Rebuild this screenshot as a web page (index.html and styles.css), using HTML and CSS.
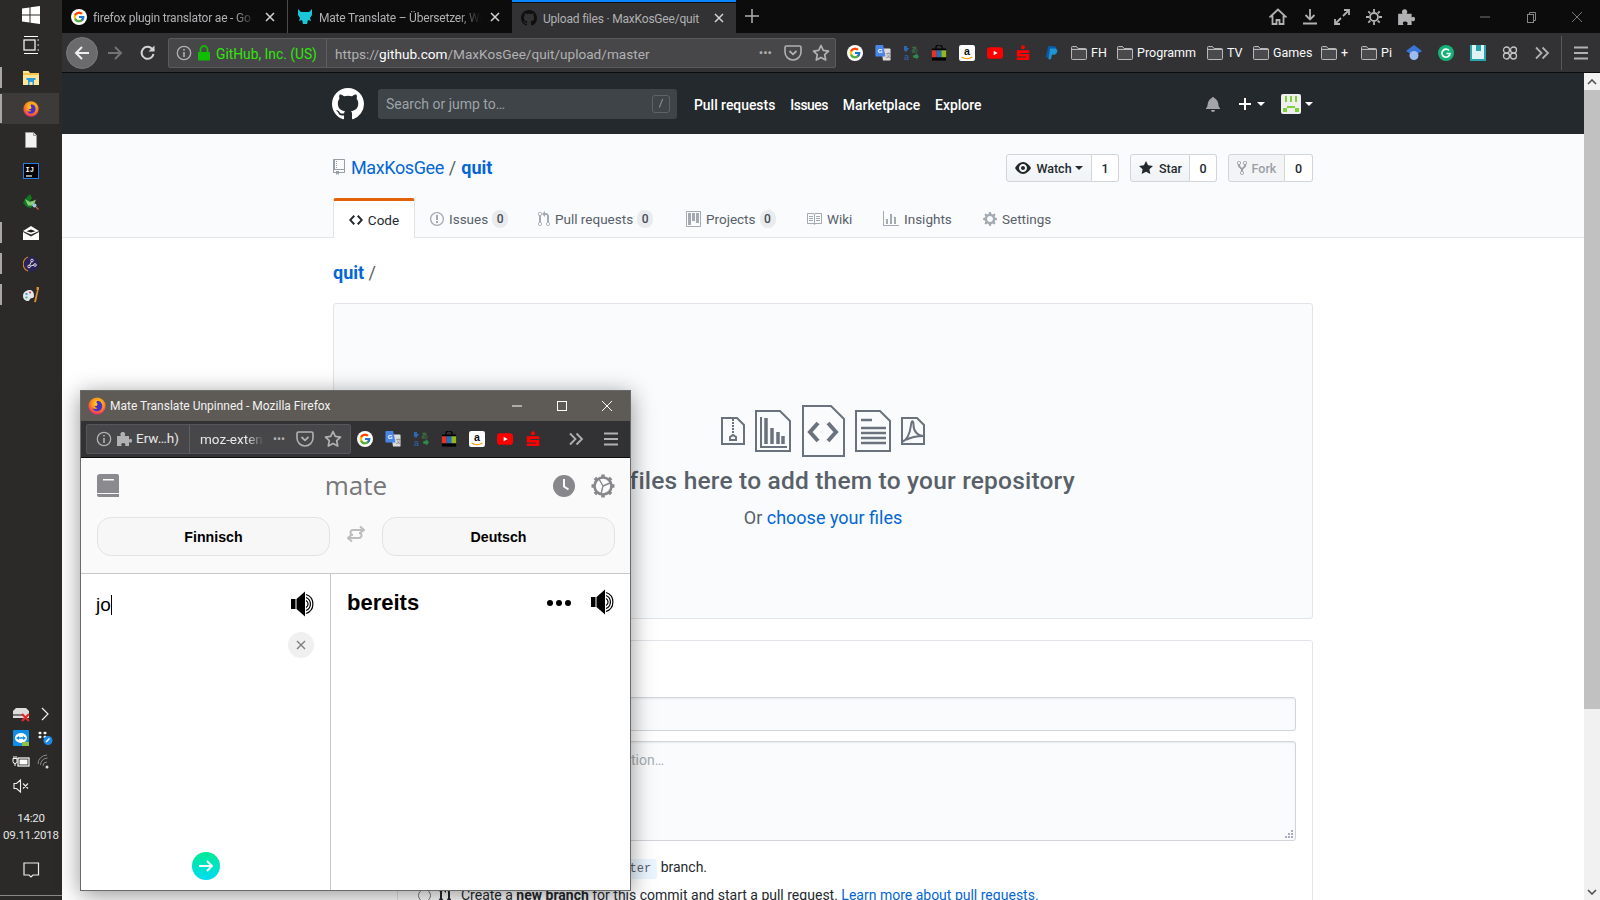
FILE: index.html
```html
<!DOCTYPE html>
<html lang="en">
<head>
<meta charset="utf-8">
<title>Upload files · MaxKosGee/quit</title>
<link rel="stylesheet" href="styles.css">
</head>
<body>
<svg class="defs" aria-hidden="true">
  <defs>
    <radialGradient id="fxg" cx="55%" cy="35%" r="70%"><stop offset="0" stop-color="#ffe226"/><stop offset=".55" stop-color="#ff8a16"/><stop offset="1" stop-color="#e31587"/></radialGradient>
    <symbol id="i-fx" viewBox="0 0 24 24"><circle cx="12" cy="12" r="11.500" fill="url(#fxg)"/><path d="M13 5c4 .5 6 3.500 6 7 0 4-3 7-7 7-3 0-5-1.500-6-4 2.500 1.500 5.500 1 6.500-.5-2 0-3.500-1-3.500-2.500 2.500.5 3.500-1 3.500-2 0-1.500-1-2.500-1.500-3 .5-1 1.500-2 2-2z" fill="#4a2fc4"/></symbol>
    <symbol id="i-g" viewBox="0 0 48 48"><circle cx="24" cy="24" r="24" fill="#fff"/><g transform="translate(4.800 4.800) scale(.8)"><path fill="#FFC107" d="M43.600 20.500H42V20H24v8h11.300C33.700 32.700 29.200 36 24 36c-6.600 0-12-5.400-12-12s5.400-12 12-12c3 0 5.800 1.100 7.900 3l5.700-5.700C34 6.100 29.300 4 24 4 13 4 4 13 4 24s9 20 20 20 20-9 20-20c0-1.200-.1-2.400-.4-3.500z"/><path fill="#FF3D00" d="M6.300 14.700l6.600 4.800C14.700 15.100 19 12 24 12c3 0 5.800 1.100 7.900 3l5.700-5.700C34 6.100 29.300 4 24 4 16.300 4 9.700 8.300 6.300 14.700z"/><path fill="#4CAF50" d="M24 44c5.200 0 9.900-2 13.400-5.200l-6.200-5.200C29.200 35.100 26.700 36 24 36c-5.200 0-9.600-3.300-11.300-8l-6.500 5C9.500 39.600 16.200 44 24 44z"/><path fill="#1976D2" d="M43.600 20.500H42V20H24v8h11.300c-.8 2.200-2.200 4.200-4.100 5.600l6.200 5.200C37 39.200 44 34 44 24c0-1.200-.1-2.400-.4-3.500z"/></g></symbol>
    <symbol id="i-gt" viewBox="0 0 18 18"><path d="M7 4h9.500a1 1 0 0 1 1 1v11.500a1 1 0 0 1-1 1H9z" fill="#dcdcdc"/><path d="M1.500 0H9l3 13H1.500a1 1 0 0 1-1-1V1a1 1 0 0 1 1-1z" fill="#4a86e8"/><text x="3" y="9.500" font-size="7" font-weight="700" fill="#fff" font-family="Liberation Sans, sans-serif">G</text><text x="12" y="13" font-size="6" fill="#777" font-family="Noto Sans CJK JP, sans-serif">文</text></symbol>
    <symbol id="i-tr" viewBox="0 0 18 18"><path d="M1 1h3.500v2.500H7L3.500 8 1 6z" fill="#2f66b0"/><text x="9" y="8" font-size="8" fill="#3f8a4a" font-family="Noto Sans CJK JP, sans-serif">あ</text><text x="1" y="17" font-size="10" fill="#2f66b0" font-family="Liberation Sans, sans-serif">a</text><path d="M11 12l4-1.500V9l3 4-3 3.500v-2h-3z" fill="#2f8a4a"/></symbol>
    <symbol id="i-bag" viewBox="0 0 18 18"><path d="M5.500 5V3a3.500 3 0 0 1 7 0v2" fill="none" stroke="#000" stroke-width="1.300"/><rect x="1" y="4" width="16" height="2" fill="#000"/><rect x="1" y="6" width="5.400" height="8" fill="#e53325"/><rect x="6.400" y="6" width="5.300" height="8" fill="#1f6fc4"/><rect x="11.700" y="6" width="5.300" height="8" fill="#92b81e"/><rect x="1" y="14" width="16" height="3.500" fill="#000"/></symbol>
    <symbol id="i-am" viewBox="0 0 18 18"><rect width="18" height="18" rx="2.500" fill="#fff"/><text x="9" y="11.500" text-anchor="middle" font-size="12" font-weight="700" fill="#111" font-family="Liberation Sans, sans-serif">a</text><path d="M3 13.500c3.500 2.500 8.500 2.500 12 0" fill="none" stroke="#f90" stroke-width="1.300"/></symbol>
    <symbol id="i-yt" viewBox="0 0 18 18"><rect y="2.500" width="18" height="13" rx="3.500" fill="#f00"/><path d="M7.500 6.500L12 9l-4.500 2.500z" fill="#fff"/></symbol>
    <symbol id="i-sp" viewBox="0 0 18 18"><circle cx="9" cy="2.500" r="2.200" fill="#f00"/><path d="M2 6h14v3H6v1h10v6a1 1 0 0 1-1 1H2v-3h10v-1H2z" fill="#f00"/></symbol>
    <symbol id="i-pp" viewBox="0 0 18 18"><path d="M6 1h5c3 0 4.500 1.500 4 4-.6 2.600-2.800 4-5.500 4H7.500L6.500 14H3z" fill="#0a5aa6"/><path d="M8 4h5c2.500 0 3.500 1.500 3 3.500-.5 2.200-2.300 3.500-4.500 3.500H10l-1 5H6z" fill="#1f9bdc" opacity=".9"/></symbol>
    <symbol id="i-folder" viewBox="0 0 16 16"><path d="M.5 2.500a1 1 0 0 1 1-1h4l1.500 2h7.500a1 1 0 0 1 1 1v9a1 1 0 0 1-1 1h-13a1 1 0 0 1-1-1z" fill="#4a4a4d" stroke="#b8b8b8"/><path d="M.5 4.500h15" stroke="#b8b8b8"/></symbol>
    <symbol id="i-speaker" viewBox="0 0 26 26"><path d="M0 8h4.500v10H0z" fill="#000"/><path d="M5.500 8L14 .5v25L5.500 18z" fill="#000"/><g fill="none" stroke="#000" stroke-width="1.200"><path d="M15 9.500a4 4 0 0 1 0 7"/><path d="M15 6.500a7 7 0 0 1 0 13"/><path d="M15 3.500a10 10 0 0 1 0 19"/></g></symbol>
    <symbol id="i-star" viewBox="0 0 18 18"><path d="M9 1.500l2.300 4.900 5.200.7-3.800 3.600 1 5.300L9 13.400 4.300 16l1-5.300L1.500 7.100l5.200-.7z" fill="none" stroke="#b1b1b3" stroke-width="1.700" stroke-linejoin="round"/></symbol>
    <symbol id="i-pocket" viewBox="0 0 18 18"><path d="M2.500 2h13A1.500 1.500 0 0 1 17 3.500V8a8 8 0 0 1-16 0V3.500A1.500 1.500 0 0 1 2.500 2z" fill="none" stroke="#b1b1b3" stroke-width="1.600"/><path d="M5.500 7L9 10.300 12.500 7" fill="none" stroke="#b1b1b3" stroke-width="1.800"/></symbol>
    <symbol id="i-info" viewBox="0 0 16 16"><circle cx="8" cy="8" r="6.700" fill="none" stroke="#b1b1b3" stroke-width="1.300"/><path d="M7.200 7h1.600v5H7.200zM7.200 4h1.600v1.600H7.200z" fill="#b1b1b3"/></symbol>
    <symbol id="i-chev" viewBox="0 0 16 16"><path d="M2 2.500L7.500 8 2 13.500M8.500 2.500L14 8l-5.500 5.500" fill="none" stroke="#b1b1b3" stroke-width="1.800"/></symbol>
    <symbol id="i-menu" viewBox="0 0 16 16"><path d="M1 2.500h14M1 8h14M1 13.500h14" stroke="#b1b1b3" stroke-width="2"/></symbol>
    <symbol id="i-puzzle" viewBox="0 0 16 16"><path d="M1 5h4c-1.500-2 0-4 1.800-4S10 3 8.500 5h4.500v3.500c2-1.500 3-.5 3 1.300s-1 2.700-3 1.200V15H9c1.200-2-.3-3-1.800-3S4.500 13 5.800 15H1z" fill="currentColor"/></symbol>
    <symbol id="i-x" viewBox="0 0 10 10"><path d="M1 1l8 8M9 1L1 9" stroke="#d4d4d4" stroke-width="1.500"/></symbol>
    <symbol id="o-gh" viewBox="0 0 16 16"><path fill="currentColor" d="M8 0C3.580 0 0 3.580 0 8c0 3.540 2.290 6.530 5.470 7.590.4.070.55-.17.55-.38 0-.19-.01-.82-.01-1.490-2.010.37-2.530-.49-2.690-.94-.09-.23-.48-.94-.82-1.130-.28-.15-.68-.52-.01-.53.63-.01 1.080.58 1.230.82.72 1.210 1.870.87 2.330.66.070-.52.28-.87.51-1.070-1.780-.2-3.640-.89-3.640-3.950 0-.87.31-1.590.82-2.150-.08-.2-.36-1.020.08-2.120 0 0 .67-.21 2.200.82.64-.18 1.320-.27 2-.27.68 0 1.360.09 2 .27 1.530-1.040 2.200-.82 2.200-.82.44 1.100.16 1.920.08 2.120.51.56.82 1.270.82 2.150 0 3.070-1.870 3.750-3.650 3.950.29.25.54.73.54 1.480 0 1.070-.01 1.930-.01 2.200 0 .21.15.46.55.38A8.013 8.013 0 0 0 16 8c0-4.420-3.580-8-8-8z"/></symbol>
  </defs>
</svg>

<aside class="sidebar">
  <div class="dock">
    <div class="slot-start"><svg class="ico20" viewBox="0 0 20 20"><path fill="#fff" d="M1 3.500l7.500-1v7H1zM9.500 2.300L19 1v8.500H9.500zM1 10.500h7.500v7L1 16.500zM9.500 10.500H19V19l-9.500-1.300z"/></svg></div>
    <div class="slot-start"><svg class="ico20" viewBox="0 0 20 20" fill="none" stroke="#fff" stroke-width="1.200"><path d="M3 1.500h14M3 18.500h14"/><rect x="3" y="5" width="11" height="10"/><path d="M16.500 5h1.500M16.500 15h1.500M16.500 10h1.500"/></svg></div>
    <div class="slot running"><svg class="ico16" viewBox="0 0 16 16"><path d="M0 1h5.500l1.500 2h9v12H0z" fill="#ffe79a"/><path d="M0 3h16v2H0z" fill="#f4c64f"/><path d="M5 15v-5h6v5H9.500v-3h-3v3z" fill="#2e9ae0"/><path d="M3.500 8h9v2h-9z" fill="#2e9ae0"/></svg></div>
    <div class="slot running active"><svg class="ico16"><use href="#i-fx"/></svg></div>
    <div class="slot"><svg class="ico16" viewBox="0 0 16 16"><path d="M2.500 .5h8l3 3v12h-11z" fill="#f2f2f2" stroke="#9a9a9a"/><path d="M10.500 .5v3h3" fill="#ddd" stroke="#9a9a9a"/></svg></div>
    <div class="slot"><svg class="ico16" viewBox="0 0 16 16"><rect x=".5" y=".5" width="15" height="15" fill="#000" stroke="#2a7de1"/><text x="2.500" y="9" font-size="7" font-weight="700" fill="#fff" font-family="Liberation Mono, monospace">IJ</text><path d="M3 13h6" stroke="#fff" stroke-width="1.200"/></svg></div>
    <div class="slot"><svg class="ico16" viewBox="0 0 16 16"><path d="M7 0L2 5 0 9l4 4 4 1 2-3-1-4-2 0 2-3z" fill="#0e7a1c"/><path d="M2 5l5 3 4-1.500 2-1-2.500 6H5z" fill="#8ccb7a"/><circle cx="11.500" cy="11.500" r="2" fill="#9cc4e8"/><path d="M13 13l2.500 2.500" stroke="#c46a3a" stroke-width="1.300"/></svg></div>
    <div class="slot running"><svg class="ico16" viewBox="0 0 16 16"><path d="M0 6L8 1l8 5-8 3.500z" fill="#fff"/><path d="M3.500 6.200L8 4.500l4.500 1.700L8 7.500z" fill="#1a1a1a"/><path d="M0 7l8 4.500L16 7v8H0z" fill="#fff"/></svg></div>
    <div class="slot running"><svg class="ico16" viewBox="0 0 16 16"><circle cx="8" cy="8" r="7.500" fill="#2a2358"/><path d="M5 1a7.500 7.500 0 0 0 0 14" fill="none" stroke="#e08a2e" stroke-width="1.200"/><g fill="none" stroke="#ddd"><circle cx="9" cy="4.500" r="1.300"/><circle cx="6" cy="10.500" r="1.300"/><circle cx="12" cy="9" r="1.300"/><path d="M8.500 5.500L6.500 9.500M11 9l-4 1.200"/></g></svg></div>
    <div class="slot running"><svg class="ico16" viewBox="0 0 16 16"><path d="M7 3C3 3 0 5.500 0 9c0 3.500 2.500 5 5 5 1.500 0 1.500-1.500 2.500-2.500 1-.7 3.500 0 3.500-2.500 0-3.500-1.500-6-4-6z" fill="#dfe8ef"/><circle cx="3.500" cy="7" r="1.100" fill="#2e8ed6"/><circle cx="7" cy="5.500" r="1.100" fill="#e0463e"/><circle cx="3.500" cy="10.500" r="1.100" fill="#3fae5a"/><path d="M11 15l3-12 1.500.3-2.500 12z" fill="#d98a34"/><path d="M13.500 0h2.500v3h-2.500z" fill="#d98a34"/></svg></div>
  </div>
  <div class="tray">
    <div class="tray-grid">
      <svg class="ico18" viewBox="0 0 18 18"><path d="M1 6l3-3h10l3 3v7H1z" fill="#ddd"/><path d="M1 9h11v2H1z" fill="#777"/><path d="M10 9l7 7M17 9l-7 7" stroke="#e02a2a" stroke-width="2.200"/></svg>
      <svg class="ico14" viewBox="0 0 14 14"><path d="M4 1l6 6-6 6" fill="none" stroke="#eee" stroke-width="1.200"/></svg>
      <svg class="ico16" viewBox="0 0 16 16"><rect width="16" height="16" rx="1" fill="#0e8ee9"/><ellipse cx="8" cy="8" rx="6" ry="5" fill="#fff"/><path d="M3 8l3-2v1.300h4V6l3 2-3 2V8.700H6V10z" fill="#0e8ee9"/><rect x="9" y="12" width="7" height="4" fill="#8bc34a"/></svg>
      <svg class="ico16" viewBox="0 0 16 16"><g fill="#fff"><path d="M1 3l2-1.500L5 3 3 4.500zM6 3l2-1.500L10 3 8 4.500zM1 7l2-1.500L5 7 3 8.500zM6 7l2-1.500L10 7 8 8.500z"/></g><circle cx="11" cy="10.500" r="4.500" fill="#1e88e5"/><path d="M9 12l3.500-3.500" stroke="#fff" stroke-width="1.500"/></svg>
      <svg class="ico18" viewBox="0 0 18 18" fill="none" stroke="#fff"><rect x="6" y="5" width="11" height="8" stroke-width="1.200"/><rect x="7.500" y="6.500" width="8" height="5" fill="#fff" stroke="none"/><path d="M1 5.500v3a2 2 0 0 0 4 0v-3zM2 3v2.500M4 3v2.500M3 10.500V13" stroke-width="1"/></svg>
      <svg class="ico16" viewBox="0 0 16 16" fill="none" stroke="#8a8a8a"><path d="M1 10a9 9 0 0 1 9-9M3.500 11a7 7 0 0 1 7-7M6 12a4 4 0 0 1 4-4"/><circle cx="10" cy="13" r="1.500" fill="#ddd" stroke="none"/></svg>
      <svg class="ico16" viewBox="0 0 16 16" fill="none" stroke="#eee" stroke-width="1.100"><path d="M1 5.500h2.500L7.500 2v12l-4-3.500H1zM10 5.500l5 5M15 5.500l-5 5"/></svg>
    </div>
    <div class="clock">14:20<br>09.11.2018</div>
    <div class="notif"><svg class="ico20" viewBox="0 0 20 20"><path d="M3 3h14.500v12H12l-2 2-2-2H3z" fill="none" stroke="#eee" stroke-width="1.200"/></svg></div>
    <div class="dock-line"></div>
  </div>
</aside>

<div class="main">
  <div class="tabstrip">
    <div class="tab"><svg class="ico16"><use href="#i-g"/></svg><span class="tab-t">firefox plugin translator ae - Go</span><svg class="tab-x"><use href="#i-x"/></svg></div>
    <div class="tab sep"><svg class="ico16" viewBox="0 0 16 16"><path d="M1 0l3 3h8l3-3v6l-2 3 1 3-3-1-1 4H6l-1-4-3 1 1-3-2-3z" fill="#19c7d6"/></svg><span class="tab-t">Mate Translate – Übersetzer, Wö</span><svg class="tab-x"><use href="#i-x"/></svg></div>
    <div class="tab current"><svg class="ico16 gh-dark"><use href="#o-gh"/></svg><span class="tab-t">Upload files · MaxKosGee/quit</span><svg class="tab-x"><use href="#i-x"/></svg></div>
    <svg class="newtab" viewBox="0 0 16 16"><path d="M8 1v14M1 8h14" stroke="#b1b1b3" stroke-width="1.500"/></svg>
    <div class="winbtns">
      <div class="ext-icons">
        <svg class="ico18" viewBox="0 0 18 18"><path d="M9 1.500L1.500 8.500h2V16h4v-4h3v4h4V8.500h2z" fill="none" stroke="#b1b1b3" stroke-width="1.800"/></svg>
        <svg class="ico18" viewBox="0 0 18 18"><path d="M9 1v10M4.500 7L9 11.500 13.500 7M2 15.500h14" fill="none" stroke="#b1b1b3" stroke-width="1.800"/></svg>
        <svg class="ico18" viewBox="0 0 18 18"><path d="M10 8l6-6M11 2h5v5M8 10l-6 6M2 11v5h5" fill="none" stroke="#b1b1b3" stroke-width="1.800"/></svg>
        <svg class="ico18 c-grey" viewBox="0 0 18 18"><circle cx="9" cy="9" r="4" fill="none" stroke="currentColor" stroke-width="1.800"/><path d="M9 1v3M9 14v3M1 9h3M14 9h3M3.300 3.300l2 2M12.700 12.700l2 2M3.300 14.700l2-2M12.700 5.300l2-2" stroke="currentColor" stroke-width="1.800"/></svg>
        <svg class="ico18 c-grey"><use href="#i-puzzle"/></svg>
      </div>
      <div class="caption">
        <svg class="capt" viewBox="0 0 12 12"><path d="M1 6h10" stroke="#777"/></svg>
        <svg class="capt" viewBox="0 0 12 12" fill="none" stroke="#888"><rect x="2.500" y="3.500" width="6" height="8"/><path d="M4.500 3.500v-2h6v8h-2"/></svg>
        <svg class="capt" viewBox="0 0 12 12"><path d="M1 1l10 10M11 1L1 11" stroke="#777"/></svg>
      </div>
    </div>
  </div>

  <div class="toolbar">
    <div class="backbtn"><svg class="ico18" viewBox="0 0 18 18"><path d="M16 9H3M9 3L3 9l6 6" fill="none" stroke="#eee" stroke-width="2"/></svg></div>
    <div class="navbtn"><svg class="ico18" viewBox="0 0 18 18"><path d="M2 9h13M9 3l6 6-6 6" fill="none" stroke="#737373" stroke-width="2"/></svg></div>
    <div class="navbtn"><svg class="ico18" viewBox="0 0 18 18"><path d="M14.500 10a6 6 0 1 1-1.500-5.300L15 6.500" fill="none" stroke="#d4d4d4" stroke-width="2"/><path d="M15.500 1.500v6h-6z" fill="#d4d4d4"/></svg></div>
    <div class="urlbar">
      <svg class="url-info"><use href="#i-info"/></svg>
      <svg class="url-lock" viewBox="0 0 14 16"><path d="M3.500 7V4.500a3.500 3.500 0 0 1 7 0V7" fill="none" stroke="#12bc00" stroke-width="1.800"/><rect x="1" y="7" width="12" height="8.500" rx="1" fill="#12bc00"/></svg>
      <span class="url-org">GitHub, Inc. (US)</span>
      <span class="url-text">https://<b>github.com</b>/MaxKosGee/quit/upload/master</span>
      <span class="url-dots">•••</span>
      <svg class="url-act"><use href="#i-pocket"/></svg>
      <svg class="url-act"><use href="#i-star"/></svg>
    </div>
    <div class="tb-icons">
      <span class="tb-slot"><svg class="ico16"><use href="#i-g"/></svg></span>
      <span class="tb-slot"><svg class="ico16"><use href="#i-gt"/></svg></span>
      <span class="tb-slot"><svg class="ico16"><use href="#i-tr"/></svg></span>
      <span class="tb-slot"><svg class="ico16"><use href="#i-bag"/></svg></span>
      <span class="tb-slot"><svg class="ico16"><use href="#i-am"/></svg></span>
      <span class="tb-slot"><svg class="ico16"><use href="#i-yt"/></svg></span>
      <span class="tb-slot"><svg class="ico16"><use href="#i-sp"/></svg></span>
      <span class="tb-slot"><svg class="ico16"><use href="#i-pp"/></svg></span>
    </div>
    <div class="bm bm-fh"><svg class="ico16"><use href="#i-folder"/></svg>FH</div>
    <div class="bm bm-prog"><svg class="ico16"><use href="#i-folder"/></svg>Programm</div>
    <div class="bm bm-tv"><svg class="ico16"><use href="#i-folder"/></svg>TV</div>
    <div class="bm bm-games"><svg class="ico16"><use href="#i-folder"/></svg>Games</div>
    <div class="bm bm-plus"><svg class="ico16"><use href="#i-folder"/></svg>+</div>
    <div class="bm bm-pi"><svg class="ico16"><use href="#i-folder"/></svg>Pi</div>
    <span class="tb-slot32"><svg class="ico16" viewBox="0 0 16 16"><path d="M8 0l8 6-8 5-8-5z" fill="#3a76d8"/><circle cx="8" cy="10.500" r="4.500" fill="#9cbcf2"/></svg></span>
    <span class="tb-slot32"><svg class="ico16" viewBox="0 0 16 16"><circle cx="8" cy="8" r="8" fill="#15b377"/><path d="M11 5.500A4 4 0 1 0 12 8.500H8.500" fill="none" stroke="#fff" stroke-width="1.700"/></svg></span>
    <span class="tb-slot32"><svg class="ico16" viewBox="0 0 16 16"><rect width="16" height="16" fill="#2aa5ad"/><rect x="2" y="0" width="12" height="14" fill="#dff3f4"/><rect x="6" y="0" width="5" height="6" fill="#2aa5ad"/></svg></span>
    <span class="tb-slot32"><svg class="ico16" viewBox="0 0 16 16" fill="none" stroke="#c4c4c4" stroke-width="1.300"><circle cx="4.500" cy="5" r="3"/><circle cx="11.500" cy="5" r="3"/><circle cx="4.500" cy="11" r="3"/><circle cx="11.500" cy="11" r="3"/></svg></span>
    <span class="tb-slot32"><svg class="ico16"><use href="#i-chev"/></svg></span>
    <span class="tb-divider"></span>
    <span class="tb-menu"><svg class="ico16"><use href="#i-menu"/></svg></span>
  </div>

  <div class="viewport">
    <div class="page">
      <header class="gh-header">
        <div class="container gh-bar">
          <svg class="gh-logo"><use href="#o-gh"/></svg>
          <div class="gh-search"><span>Search or jump to…</span><kbd>/</kbd></div>
          <nav class="gh-nav"><a>Pull requests</a><a class="nav-issues">Issues</a><a>Marketplace</a><a>Explore</a></nav>
          <div class="gh-user">
            <svg class="user-bell" viewBox="0 0 14 16"><path fill="#a3a5a8" d="M13.990 11.991v1H0v-1l.73-.58c.769-.769.809-2.547 1.189-4.416.77-3.767 4.077-4.996 4.077-4.996 0-.55.45-1 1-1 .55 0 1 .45 1 1 0 0 3.387 1.229 4.156 4.996.38 1.879.42 3.657 1.19 4.417l.65.58h-.002zM6.995 15.990c1.110 0 2-.89 2-2h-4c0 1.110.89 2 2 2z"/></svg>
            <svg class="user-plus" viewBox="0 0 12 16"><path fill="#fff" d="M12 9H7v5H5V9H0V7h5V2h2v5h5v2z"/></svg>
            <span class="caret"></span>
            <svg class="avatar" viewBox="0 0 10 10" shape-rendering="crispEdges"><rect width="10" height="10" fill="#efefef"/><path d="M2 1h1v3H2zM4.500 1h1v3h-1zM7 1h1v3H7zM3 6h4v1H3zM1 7h2v2H1zM7 7h2v2H7z" fill="#7fd13b"/></svg>
            <span class="caret"></span>
          </div>
        </div>
      </header>

      <section class="repohead">
        <div class="container">
          <div class="repo-row">
            <h1 class="repo-title">
              <svg class="repo-ico" viewBox="0 0 12 16"><path fill="#959da5" d="M4 9H3V8h1v1zm0-3H3v1h1V6zm0-2H3v1h1V4zm0-2H3v1h1V2zm8-1v12c0 .55-.45 1-1 1H6v2l-1.500-1.500L3 16v-2H1c-.55 0-1-.45-1-1V1c0-.55.45-1 1-1h10c.55 0 1 .45 1 1zm-1 10H1v2h2v-1h3v1h5v-2zm0-10H2v9h9V1z"/></svg>
              <a class="link owner">MaxKosGee</a><span class="slash">/</span><a class="link strong">quit</a>
            </h1>
            <div class="repo-btns">
              <div class="btn-pair"><span class="btn b-watch"><svg class="bico" viewBox="0 0 16 16"><path fill="#24292e" d="M8.060 2C3 2 0 8 0 8s3 6 8.060 6C13 14 16 8 16 8s-3-6-7.940-6zM8 12c-2.200 0-4-1.780-4-4 0-2.200 1.800-4 4-4 2.220 0 4 1.800 4 4 0 2.220-1.780 4-4 4zm2-4c0 1.110-.89 2-2 2-1.110 0-2-.89-2-2 0-1.110.89-2 2-2 1.110 0 2 .89 2 2z"/></svg>Watch<span class="caret dark"></span></span><span class="count">1</span></div>
              <div class="btn-pair"><span class="btn b-star"><svg class="bico" viewBox="0 0 14 16"><path fill="#24292e" d="M14 6l-4.900-.64L7 1 4.900 5.360 0 6l3.600 3.260L2.670 14 7 11.670 11.330 14l-.93-4.740L14 6z"/></svg>Star</span><span class="count">0</span></div>
              <div class="btn-pair"><span class="btn b-fork disabled"><svg class="bico fork" viewBox="0 0 10 16"><path fill="#9aa0a6" d="M8 1a1.993 1.993 0 0 0-1 3.720V6L5 8 3 6V4.720A1.993 1.993 0 0 0 2 1a1.993 1.993 0 0 0-1 3.720V6.500l3 3v1.780A1.993 1.993 0 0 0 5 15a1.993 1.993 0 0 0 1-3.720V9.500l3-3V4.720A1.993 1.993 0 0 0 8 1zM2 4.200C1.340 4.200.8 3.650.8 3c0-.65.55-1.200 1.200-1.200.65 0 1.200.55 1.200 1.200 0 .65-.55 1.200-1.200 1.200zm3 10c-.66 0-1.200-.55-1.200-1.200 0-.65.55-1.200 1.200-1.200.65 0 1.200.55 1.200 1.200 0 .65-.55 1.200-1.200 1.200zm3-10c-.66 0-1.200-.55-1.200-1.200 0-.65.55-1.200 1.200-1.200.65 0 1.200.55 1.200 1.200 0 .65-.55 1.200-1.200 1.200z"/></svg>Fork</span><span class="count c-fork">0</span></div>
            </div>
          </div>
          <nav class="repo-tabs">
            <a class="rtab selected"><svg class="tico" viewBox="0 0 14 16"><path fill="#24292e" d="M9.500 3L8 4.500 11.500 8 8 11.500 9.500 13 14 8 9.500 3zm-5 0L0 8l4.500 5L6 11.500 2.500 8 6 4.500 4.500 3z"/></svg>Code</a>
            <a class="rtab t-issues"><svg class="tico" viewBox="0 0 14 16"><path fill="#a3aab1" d="M7 2.300c3.140 0 5.700 2.560 5.700 5.700s-2.560 5.700-5.700 5.700A5.710 5.710 0 0 1 1.300 8c0-3.140 2.560-5.700 5.700-5.700zM7 1C3.140 1 0 4.140 0 8s3.140 7 7 7 7-3.140 7-7-3.140-7-7-7zm1 3H6v5h2V4zm0 6H6v2h2v-2z"/></svg>Issues<span class="pill">0</span></a>
            <a class="rtab t-pulls"><svg class="tico" viewBox="0 0 12 16"><path fill="#a3aab1" d="M11 11.280V5c-.03-.78-.34-1.470-.94-2.060C9.460 2.350 8.780 2.030 8 2H7V0L4 3l3 3V4h1c.27.020.48.110.69.31.21.2.3.42.31.69v6.280A1.993 1.993 0 0 0 10 15a1.993 1.993 0 0 0 1-3.720zm-1 2.920c-.66 0-1.200-.55-1.200-1.200 0-.65.55-1.200 1.200-1.200.65 0 1.200.55 1.200 1.200 0 .65-.55 1.200-1.200 1.200zM4 3c0-1.110-.89-2-2-2a1.993 1.993 0 0 0-1 3.720v6.560A1.993 1.993 0 0 0 2 15a1.993 1.993 0 0 0 1-3.720V4.720c.59-.34 1-.98 1-1.720zm-.8 10c0 .66-.55 1.200-1.200 1.200-.65 0-1.200-.55-1.200-1.200 0-.65.55-1.200 1.200-1.200.65 0 1.200.55 1.200 1.200zM2 4.200C1.340 4.200.8 3.650.8 3c0-.65.55-1.200 1.200-1.200.65 0 1.200.55 1.200 1.200 0 .65-.55 1.200-1.200 1.200z"/></svg>Pull requests<span class="pill">0</span></a>
            <a class="rtab t-proj"><svg class="tico" viewBox="0 0 15 16"><path fill="#a3aab1" fill-rule="evenodd" d="M10 12h3V2h-3v10zm-4-2h3V2H6v8zm-4 4h3V2H2v12zm-1 1h13V1H1v14zM14 0H1a1 1 0 0 0-1 1v14a1 1 0 0 0 1 1h13a1 1 0 0 0 1-1V1a1 1 0 0 0-1-1z"/></svg>Projects<span class="pill">0</span></a>
            <a class="rtab t-wiki"><svg class="tico" viewBox="0 0 16 16"><path fill="#a3aab1" d="M3 5h4v1H3V5zm0 3h4V7H3v1zm0 2h4V9H3v1zm11-5h-4v1h4V5zm0 2h-4v1h4V7zm0 2h-4v1h4V9zm2-6v9c0 .55-.45 1-1 1H9.500l-1 1-1-1H2c-.55 0-1-.45-1-1V3c0-.55.45-1 1-1h5.500l1 1 1-1H15c.55 0 1 .45 1 1zm-8 .5L7.500 3H2v9h6V3.500zm7-.5H9.500l-.5.5V12h6V3z"/></svg>Wiki</a>
            <a class="rtab t-ins"><svg class="tico" viewBox="0 0 16 16"><path fill="#a3aab1" d="M16 14v1H0V0h1v14h15zM5 13H3V8h2v5zm4 0H7V3h2v10zm4 0h-2V6h2v7z"/></svg>Insights</a>
            <a class="rtab t-set"><svg class="tico" viewBox="0 0 14 16"><path fill="#a3aab1" d="M14 8.770v-1.600l-1.940-.64-.45-1.090.88-1.840-1.130-1.130-1.810.91-1.090-.45-.69-1.920h-1.600l-.63 1.940-1.110.45-1.840-.88-1.130 1.130.91 1.810-.45 1.090L0 7.230v1.590l1.940.64.45 1.090-.88 1.840 1.130 1.130 1.810-.91 1.090.45.69 1.920h1.590l.63-1.940 1.110-.45 1.840.88 1.130-1.130-.92-1.810.47-1.090L14 8.750v.02zM7 11c-1.660 0-3-1.340-3-3s1.340-3 3-3 3 1.340 3 3-1.340 3-3 3z"/></svg>Settings</a>
          </nav>
        </div>
      </section>

      <div class="container body">
        <div class="crumb"><a class="link strong">quit</a> <span class="crumb-slash">/</span></div>
        <div class="dropzone">
          <div class="file-icons">
            <svg class="f-s" viewBox="0 0 24 28" fill="none" stroke="#6a737d" stroke-width="2"><path d="M1 1h15l7 7v19H1z"/><path d="M11 3h2M11 6h2M11 9h2M11 12h2M11 15h2" stroke-dasharray="2 1"/><path d="M9 23v-3l3-2 3 2v3z"/></svg>
            <svg class="f-m" viewBox="0 0 36 42" fill="none" stroke="#6a737d" stroke-width="2"><path d="M1 1h24l10 10v30H1z"/><path d="M6 7v30h26" /><path d="M11 34V8M17 34V18M23 34V22M28 34V26" stroke-width="3.500"/></svg>
            <svg class="f-l" viewBox="0 0 44 52" fill="none" stroke="#6a737d" stroke-width="2"><path d="M2 1h28l13 13v37H2z"/><path d="M17 18l-8 9 8 9M27 18l8 9-8 9" stroke-width="4"/></svg>
            <svg class="f-m" viewBox="0 0 36 42" fill="none" stroke="#6a737d" stroke-width="2"><path d="M1 1h24l10 10v30H1z"/><path d="M6 10h11M6 18h25M6 23h25M6 28h25M6 33h25" stroke-width="2.500"/></svg>
            <svg class="f-s" viewBox="0 0 24 28" fill="none" stroke="#6a737d" stroke-width="2"><path d="M1 1h15l7 7v19H1z"/><path d="M1 25c5-2 8-9 9-17 .6-5 2.500-5 2.500 0 0 6 4 11 10.500 11-6 0-13 1-18 4" /></svg>
          </div>
          <h2 class="drop-title">Drag files here to add them to your repository</h2>
          <p class="drop-sub">Or <a class="link">choose your files</a></p>
        </div>
        <div class="commit">
          <h3 class="commit-h">Commit changes</h3>
          <div class="fake-input"></div>
          <div class="fake-area"><span class="ph">Add an optional extended description…</span><svg class="grip" viewBox="0 0 8 8"><path d="M6 0h2v2H6zM3 3h2v2H3zM6 3h2v2H6zM0 6h2v2H0zM3 6h2v2H3zM6 6h2v2H6z" fill="#aab"/></svg></div>
          <div class="opt opt-a"><span class="radio"></span><svg class="opt-ico" viewBox="0 0 14 16"><path fill="#24292e" d="M10.860 7c-.45-1.720-2-3-3.860-3-1.860 0-3.410 1.280-3.860 3H0v2h3.140c.45 1.720 2 3 3.860 3 1.860 0 3.410-1.280 3.860-3H14V7h-3.140z"/></svg><span>Commit directly to the <code class="chip">master</code> branch.</span></div>
          <div class="opt opt-b"><span class="radio"></span><svg class="opt-ico" viewBox="0 0 12 16"><path fill="#24292e" d="M11 11.280V5c-.03-.78-.34-1.470-.94-2.060C9.460 2.350 8.780 2.030 8 2H7V0L4 3l3 3V4h1c.27.020.48.110.69.31.21.2.3.42.31.69v6.280A1.993 1.993 0 0 0 10 15a1.993 1.993 0 0 0 1-3.720zM4 3c0-1.110-.89-2-2-2a1.993 1.993 0 0 0-1 3.720v6.560A1.993 1.993 0 0 0 2 15a1.993 1.993 0 0 0 1-3.720V4.720c.59-.34 1-.98 1-1.720z"/></svg><span>Create a <b>new branch</b> for this commit and start a pull request. <a class="link">Learn more about pull requests.</a></span></div>
        </div>
      </div>
    </div>
    <div class="scrollbar">
      <span class="sb-btn"><svg class="sb-ico" viewBox="0 0 10 6"><path d="M1 5l4-4 4 4" fill="none" stroke="#505050" stroke-width="1.600"/></svg></span>
      <span class="sb-thumb"></span>
      <span class="sb-track"></span>
      <span class="sb-btn"><svg class="sb-ico" viewBox="0 0 10 6"><path d="M1 1l4 4 4-4" fill="none" stroke="#505050" stroke-width="1.600"/></svg></span>
    </div>
  </div>
</div>

<section class="win">
  <div class="win-title">
    <svg class="ico18"><use href="#i-fx"/></svg>
    <span class="win-name">Mate Translate Unpinned - Mozilla Firefox</span>
    <div class="win-caps">
      <svg class="wcap" viewBox="0 0 12 12"><path d="M1 6h10" stroke="#fff"/></svg>
      <svg class="wcap" viewBox="0 0 12 12"><rect x="1.500" y="1.500" width="9" height="9" fill="none" stroke="#fff"/></svg>
      <svg class="wcap" viewBox="0 0 12 12"><path d="M1 1l10 10M11 1L1 11" stroke="#fff"/></svg>
    </div>
  </div>
  <div class="win-tools">
    <div class="win-url">
      <svg class="ico16"><use href="#i-info"/></svg>
      <svg class="ico16 c-grey wu-puzzle"><use href="#i-puzzle"/></svg>
      <span class="wu-ext">Erw…h)</span>
      <span class="wu-addr">moz-exten</span>
      <span class="wu-dots">•••</span>
      <svg class="ico18 wu-a wu-first"><use href="#i-pocket"/></svg>
      <svg class="ico18 wu-a"><use href="#i-star"/></svg>
    </div>
    <div class="win-ext">
      <span class="tb-slot"><svg class="ico16"><use href="#i-g"/></svg></span>
      <span class="tb-slot"><svg class="ico16"><use href="#i-gt"/></svg></span>
      <span class="tb-slot"><svg class="ico16"><use href="#i-tr"/></svg></span>
      <span class="tb-slot"><svg class="ico16"><use href="#i-bag"/></svg></span>
      <span class="tb-slot"><svg class="ico16"><use href="#i-am"/></svg></span>
      <span class="tb-slot"><svg class="ico16"><use href="#i-yt"/></svg></span>
      <span class="tb-slot"><svg class="ico16"><use href="#i-sp"/></svg></span>
    </div>
    <svg class="ico16 w-chev"><use href="#i-chev"/></svg>
    <svg class="ico16 w-menu"><use href="#i-menu"/></svg>
  </div>
  <div class="mate-top">
    <div class="mate-head">
      <svg class="m-book" viewBox="0 0 22 24"><path d="M3 0h17a2 2 0 0 1 2 2v17H3a3 3 0 0 0 0 0H0V3a3 3 0 0 1 3-3z" fill="#8a8a8f"/><path d="M0 20h22v3H2a2 2 0 0 1-2-2z" fill="#8a8a8f"/><path d="M6 5h11v1.500H6z" fill="#fafafa"/></svg>
      <div class="m-logo">mate</div>
      <div class="m-actions">
        <svg class="m-clock" viewBox="0 0 22 22"><circle cx="11" cy="11" r="11" fill="#87878c"/><path d="M11 4v7.500l4.500 3" fill="none" stroke="#fafafa" stroke-width="2"/></svg>
        <svg class="m-gear" viewBox="0 0 24 24" fill="none" stroke="#87878c"><circle cx="12" cy="12" r="8.500" stroke-width="2.600"/><path d="M12 .5v3M12 20.500v3M.5 12h3M20.500 12h3M3.900 3.900l2.100 2.100M18 18l2.100 2.100M3.900 20.100L6 18M18 6l2.100-2.100" stroke-width="3.500"/><path d="M12 12l7-3M12 12L8 5M12 12l-2 8" stroke-width="1.400"/></svg>
      </div>
    </div>
    <div class="mate-langs">
      <button class="lang">Finnisch</button>
      <svg class="swap" viewBox="0 0 18 18" fill="none" stroke="#bdbdbd" stroke-width="2"><path d="M17 5H6a2.500 2.500 0 0 0 0 5M13 1.500L17 5l-4 3"/><path d="M1 13h11a2.500 2.500 0 0 0 0-5M5 9.500L1 13l4 3.500"/></svg>
      <button class="lang">Deutsch</button>
    </div>
  </div>
  <div class="panes">
    <div class="pane-l">
      <div class="src-row"><span class="src-text">jo<i class="cursor"></i></span><svg class="spk spk-l"><use href="#i-speaker"/></svg></div>
      <div class="clear"><svg viewBox="0 0 10 10"><path d="M1 1l8 8M9 1L1 9" stroke="#7d7d7d" stroke-width="1.400"/></svg></div>
      <div class="send"><svg viewBox="0 0 16 16"><path d="M1 8h13M9 3l5 5-5 5" fill="none" stroke="#fff" stroke-width="1.800"/></svg></div>
    </div>
    <div class="pane-r">
      <span class="res-text">bereits</span>
      <span class="res-dots"><i></i><i></i><i></i></span>
      <svg class="spk spk-r"><use href="#i-speaker"/></svg>
    </div>
  </div>
</section>
</body>
</html>
```

FILE: styles.css
```css
* { box-sizing: border-box; }
html, body { margin: 0; padding: 0; }
body { width: 1600px; height: 900px; overflow: hidden; display: flex; position: relative; font-family: Roboto, "Liberation Sans", sans-serif; font-size: 14px; color: #24292e; background: #fff; }
svg { display: block; flex: none; }
a { text-decoration: none; }
.defs { width: 0; height: 0; overflow: hidden; }
.ico14 { width: 14px; height: 14px; }
.ico16 { width: 16px; height: 16px; }
.ico18 { width: 18px; height: 18px; }
.ico20 { width: 20px; height: 20px; }
.c-grey { color: #b1b1b3; }
.link { color: #0366d6; }
.strong { font-weight: 700; letter-spacing: 0; }

/* Windows dock */
.sidebar { width: 62px; flex: none; height: 900px; background: #2b2a29; display: flex; flex-direction: column; justify-content: space-between; }
.slot-start { height: 30px; display: flex; align-items: center; justify-content: center; }
.slot-start + .slot { margin-top: 2px; }
.slot { height: 31px; display: flex; align-items: center; justify-content: center; position: relative; }
.running::before { content: ""; position: absolute; left: 0; top: 5px; width: 2px; height: 21px; background: #aaa6a2; }
.active { background: #3d3b3a; width: 59px; padding-left: 3px; }
.active::before { top: 1px; height: 29px; }
.tray { display: flex; flex-direction: column; align-items: center; }
.tray-grid { display: grid; grid-template-columns: 24px 24px; grid-auto-rows: 24px; place-items: center; margin: 0 0 12px 4px; }
.clock { font-size: 11.500px; letter-spacing: -.2px; line-height: 17px; text-align: center; color: #e6e6e6; white-space: nowrap; }
.notif { height: 34px; display: flex; align-items: center; margin-top: 9px; }
.dock-line { width: 62px; height: 1px; background: #8a8886; margin-top: 8px; margin-bottom: 4px; }

/* Browser chrome */
.main { flex: 1; min-width: 0; height: 900px; display: flex; flex-direction: column; }
.tabstrip { height: 33px; flex: none; background: #0c0c0d; display: flex; align-items: stretch; }
.tab { width: 225px; display: flex; align-items: center; padding: 0 12px 0 9px; gap: 6px; color: #b1b1b3; font-size: 12px; letter-spacing: -.2px; position: relative; }
.sep { border-left: 1px solid #4a4a4f; padding-left: 9px; }
.current { width: 224px; background: #323234; border-top: 2px solid #0a84ff; box-shadow: inset 0 1px 0 #0c0c0d; }
.tab-t { flex: 1; min-width: 0; padding-top: 2px; white-space: nowrap; overflow: hidden; -webkit-mask-image: linear-gradient(to left, transparent, #000 22px); mask-image: linear-gradient(to left, transparent, #000 22px); }
.current .tab-t { -webkit-mask-image: none; mask-image: none; }
.tab-x { width: 10px; height: 10px; margin-left: 3px; }
.gh-dark { color: #0f0f10; }
.newtab { width: 16px; height: 16px; margin: 8px 0 0 8px; }
.winbtns { margin-left: auto; display: flex; align-items: center; }
.ext-icons { display: flex; gap: 14px; margin-right: 64px; }
.caption { display: flex; gap: 34px; padding-right: 17px; }
.capt { width: 12px; height: 12px; }

.toolbar { height: 40px; flex: none; background: #323234; border-bottom: 1px solid #0c0c0d; display: flex; align-items: center; }
.backbtn { width: 32px; height: 32px; margin-left: 4px; border-radius: 50%; background: #6b6b6d; display: flex; align-items: center; justify-content: center; border: 1px solid #7a7a7c; }
.navbtn { width: 33px; display: flex; justify-content: center; }
.urlbar { width: 668px; height: 30px; margin-left: 4px; background: #474749; border: 1px solid #5a5a5c; border-radius: 2px; display: flex; align-items: center; font-size: 13.600px; }
.url-info { width: 16px; height: 16px; margin-left: 7px; }
.url-lock { width: 14px; height: 16px; margin-left: 5px; }
.url-org { color: #30e60b; margin-left: 5px; width: 111px; height: 28px; line-height: 31px; border-right: 1px solid #5f5f61; white-space: nowrap; font-size: 13.800px; }
.url-text { color: #b1b1b3; margin-left: 8px; flex: 1; min-width: 0; white-space: nowrap; padding-top: 2px; }
.url-text b { font-weight: 400; color: #fff; }
.url-dots { color: #b1b1b3; font-size: 13px; margin-right: 12px; }
.url-act { width: 18px; height: 18px; margin-right: 6px; }
.url-act:last-child { margin-right: 5px; margin-left: 4px; }
.tb-icons { display: flex; margin-left: 5px; }
.tb-slot { width: 28px; display: flex; justify-content: center; }
.tb-slot32 { width: 32px; display: flex; justify-content: center; }
.bm { display: flex; align-items: center; gap: 4px; color: #f9f9fa; font-size: 12.500px; white-space: nowrap; }
.bm-fh { width: 46px; margin-left: 6px; }
.bm-prog { width: 90px; }
.bm-tv { width: 46px; }
.bm-games { width: 68px; }
.bm-plus { width: 40px; }
.bm-pi { width: 37px; }
.tb-divider { width: 1px; height: 34px; background: #58585a; margin-left: 3px; }
.tb-menu { margin-left: 11px; }

/* Page */
.viewport { flex: 1; min-height: 0; display: flex; }
.page { flex: 1; min-width: 0; overflow: hidden; }
.container { width: 980px; margin: 0 auto; }
.scrollbar { width: 16px; flex: none; display: flex; flex-direction: column; background: #f1f1f1; }
.sb-btn { height: 17px; display: flex; align-items: center; justify-content: center; }
.sb-ico { width: 10px; height: 6px; }
.sb-thumb { height: 619px; background: #c1c1c1; }
.sb-track { flex: 1; }

.gh-header { height: 61px; background: #24292e; }
.gh-bar { height: 61px; display: flex; align-items: center; }
.gh-logo { width: 32px; height: 32px; color: #fff; margin-left: -1px; }
.gh-search { width: 299px; height: 30px; margin-left: 14px; background: #3f4448; border-radius: 3px; display: flex; align-items: center; justify-content: space-between; padding: 0 7px 0 8px; color: #9da3a8; font-size: 14px; }
.gh-search kbd { width: 18px; height: 18px; border: 1px solid #5e6367; border-radius: 3px; font: 11px Roboto, sans-serif; text-align: center; line-height: 16px; color: #9da3a8; }
.gh-nav { display: flex; gap: 15px; margin-left: 17px; padding-top: 2px; color: #fff; font-weight: 500; font-size: 13.900px; white-space: nowrap; }
.nav-issues { letter-spacing: -.5px; }
.gh-user { margin-left: auto; display: flex; align-items: center; }
.user-bell { width: 14px; height: 16px; margin-right: 19px; }
.user-plus { width: 12px; height: 16px; margin-right: 6px; }
.caret { width: 0; height: 0; border-style: solid; border-width: 4px 4px 0; border-color: #fff transparent transparent; display: inline-block; }
.caret.dark { border-top-color: #24292e; margin-left: 0; }
.avatar { width: 20px; height: 20px; margin: 0 4px 0 16px; border-radius: 2px; }

.repohead { height: 104px; background: #fafbfc; border-bottom: 1px solid #e1e4e8; }
.repo-row { height: 64px; padding-top: 4px; display: flex; align-items: center; justify-content: space-between; }
.repo-title { margin: 0; display: flex; align-items: center; font-size: 18px; font-weight: 400; line-height: 28px; white-space: nowrap; }
.owner { letter-spacing: -.4px; }
.repo-ico { width: 12px; height: 16px; margin-right: 6px; margin-top: -2px; }
.slash { color: #586069; margin: 0 5px; }
.repo-btns { display: flex; gap: 11px; }
.btn-pair { display: flex; height: 28px; font-size: 12.500px; font-weight: 500; }
.btn { display: flex; align-items: center; justify-content: center; gap: 3px; background: linear-gradient(#fafbfc, #eff3f6); border: 1px solid #d1d5da; border-radius: 3px 0 0 3px; }
.b-watch { width: 86px; }
.b-star { width: 60px; }
.b-fork { width: 57px; }
.count { display: flex; align-items: center; justify-content: center; width: 27px; background: #fff; border: 1px solid #d1d5da; border-left: 0; border-radius: 0 3px 3px 0; font-weight: 500; }
.c-fork { width: 28px; }
.bico { width: 16px; height: 16px; margin-right: 2px; }
.bico.fork { width: 10px; }
.disabled { color: #9aa0a6; background: #f3f4f6; }
.repo-tabs { display: flex; height: 40px; font-size: 13.500px; color: #586069; }
.rtab { display: flex; align-items: center; gap: 5px; height: 40px; white-space: nowrap; flex: none; padding-top: 2px; }
.tico { height: 16px; width: auto; }
.selected { width: 82px; justify-content: center; background: #fff; color: #24292e; border: 1px solid #e1e4e8; border-top: 3px solid #e36209; border-bottom: 0; border-radius: 3px 3px 0 0; position: relative; z-index: 1; padding-top: 0; }
.t-issues { margin-left: 15px; width: 108px; }
.t-pulls { width: 148px; }
.t-proj { width: 120px; }
.t-wiki { width: 77px; }
.t-ins { width: 100px; }
.pill { font-size: 12px; font-weight: 500; min-width: 16px; height: 18px; border-radius: 9px; line-height: 18px; text-align: center; background: #e9ebed; color: #444d56; margin-left: -1px; }

.crumb { height: 26px; margin-top: 22px; font-size: 18px; line-height: 26px; }
.crumb-slash { color: #586069; }
.dropzone { height: 316px; margin-top: 17px; background: #fafbfc; border: 1px solid #e1e4e8; border-radius: 3px; display: flex; flex-direction: column; align-items: center; padding-top: 101px; }
.file-icons { display: flex; align-items: center; gap: 10px; height: 52px; }
.f-s { width: 24px; height: 28px; }
.f-m { width: 36px; height: 42px; }
.f-l { width: 44px; height: 52px; }
.drop-title { margin: 8px 0 0; font-size: 24.500px; letter-spacing: .2px; line-height: 32px; font-weight: 500; color: #586069; white-space: nowrap; }
.drop-sub { margin: 8px 0 0; font-size: 18px; line-height: 26px; color: #586069; }
.commit { margin: 21px 0 0 64px; height: 300px; border: 1px solid #e1e4e8; border-radius: 3px; padding: 0 16px; }
.commit-h { margin: 0; height: 56px; line-height: 56px; font-size: 16px; font-weight: 400; }
.fake-input { height: 34px; background: #fafbfc; border: 1px solid #d1d5da; border-radius: 3px; box-shadow: inset 0 1px 2px rgba(27,31,35,.075); width: 882px; }
.fake-area { height: 100px; margin-top: 10px; background: #fafbfc; border: 1px solid #d1d5da; border-radius: 3px; box-shadow: inset 0 1px 2px rgba(27,31,35,.075); width: 882px; padding: 10px 8px 0; display: flex; flex-direction: column; }
.ph { color: #a8adb3; font-size: 14px; line-height: 16px; }
.grip { width: 8px; height: 8px; margin: auto -6px 2px auto; }
.opt { display: flex; align-items: center; height: 20px; font-size: 14px; white-space: nowrap; }
.opt-a { margin-top: 16px; }
.opt-b { margin-top: 8px; }
.radio { width: 13px; height: 13px; border: 1px solid #767676; border-radius: 50%; margin-left: 4px; }
.opt-ico { width: 12px; height: 16px; margin: 0 10px 0 8px; }
.chip { font: 12px "Liberation Mono", monospace; background: #eaf5ff; color: #586069; padding: 3px 6px; border-radius: 3px; }

/* Floating Firefox window */
.win { position: absolute; left: 80px; top: 390px; width: 551px; height: 501px; border: 1px solid #6a6a6a; background: #fff; box-shadow: 0 4px 22px rgba(0,0,0,.42); display: flex; flex-direction: column; }
.win-title { height: 30px; flex: none; background: #5e5a56; display: flex; align-items: center; padding-left: 7px; color: #f2f2f2; font-size: 12px; gap: 4px; }
.win-name { white-space: nowrap; }
.win-caps { margin-left: auto; display: flex; gap: 33px; padding-right: 17px; }
.wcap { width: 12px; height: 12px; }
.win-tools { height: 37px; flex: none; background: #323234; border-bottom: 1px solid #0c0c0d; display: flex; align-items: center; padding-left: 5px; }
.win-url { width: 265px; height: 30px; background: #474749; border: 1px solid #56565a; border-radius: 2px; display: flex; align-items: center; padding-left: 9px; color: #e8e8e8; font-size: 13.500px; flex: none; }
.wu-puzzle { margin-left: 4px; }
.wu-ext { margin-left: 4px; width: 54px; height: 28px; line-height: 27px; border-right: 1px solid #606062; white-space: nowrap; }
.wu-addr { margin-left: 10px; width: 64px; overflow: hidden; white-space: nowrap; -webkit-mask-image: linear-gradient(to left, transparent, #000 18px); mask-image: linear-gradient(to left, transparent, #000 18px); }
.wu-dots { color: #b1b1b3; font-size: 12px; margin-left: 9px; }
.wu-a { margin-left: 10px; }
.wu-first { margin-left: 11px; }
.win-ext { display: flex; flex: none; }
.w-chev { margin-left: 21px; }
.w-menu { margin-left: 19px; }
.mate-top { flex: none; background: #fafafa; border-bottom: 1px solid #c8c8c8; padding: 0 15px 17px 16px; }
.mate-head { height: 59px; display: grid; grid-template-columns: 1fr auto 1fr; align-items: center; }
.m-book { width: 22px; height: 24px; margin-top: -3px; }
.m-logo { font-family: "Open Sans", sans-serif; font-size: 26px; color: #77777b; line-height: 36px; margin-top: -6px; }
.m-actions { display: flex; justify-content: flex-end; align-items: center; gap: 16px; margin-top: -3px; }
.m-clock { width: 22px; height: 22px; }
.m-gear { width: 24px; height: 24px; }
.mate-langs { display: flex; align-items: center; justify-content: space-between; }
.lang { width: 233px; height: 39px; border: 1px solid #e3e3e3; border-radius: 14px; background: #f7f7f7; font: 700 14.200px "Liberation Sans", sans-serif; color: #000; padding: 0; }
.swap { width: 18px; height: 18px; margin-top: -5px; }
.panes { flex: 1; min-height: 0; display: flex; }
.pane-l { width: 250px; flex: none; border-right: 1px solid #c8c8c8; display: flex; flex-direction: column; padding: 16px 15px 10px 15px; }
.src-row { height: 30px; display: flex; align-items: center; justify-content: space-between; }
.src-text { font-family: "Liberation Sans", sans-serif; font-size: 19px; color: #000; display: inline-flex; align-items: center; }
.cursor { width: 1px; height: 20px; background: #000; }
.spk { width: 26px; height: 26px; }
.spk-l { margin: -2px -2px 0 0; }
.spk-r { margin-top: 1px; }
.clear { width: 26px; height: 26px; border-radius: 50%; background: #f0f0f0; margin-top: 12px; align-self: flex-end; margin-right: 1px; display: flex; align-items: center; justify-content: center; }
.clear svg { width: 10px; height: 10px; }
.send { width: 28px; height: 28px; border-radius: 50%; background: linear-gradient(#00ea93, #00dcf5); margin-top: auto; align-self: center; display: flex; align-items: center; justify-content: center; }
.send svg { width: 16px; height: 16px; }
.pane-r { flex: 1; display: flex; align-items: flex-start; padding: 14px 13px 0 16px; }
.res-text { font: 700 22px/30px "Liberation Sans", sans-serif; color: #000; }
.res-dots { display: flex; gap: 3px; margin-left: auto; margin-top: 12px; margin-right: 20px; }
.res-dots i { width: 6px; height: 6px; border-radius: 50%; background: #000; }
```
